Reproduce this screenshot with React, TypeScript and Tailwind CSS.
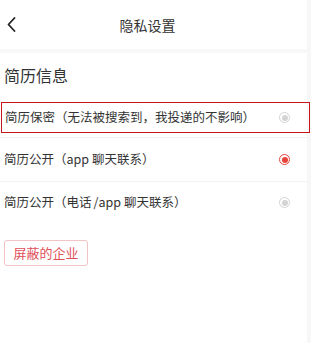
import React from "react";

const Radio = ({ checked }: { checked: boolean }) => (
  <span
    className={`flex h-[11px] w-[11px] items-center justify-center rounded-full border ${
      checked ? "border-[#e8433b]" : "border-[#d4d4d4]"
    }`}
  >
    <span
      className={`h-[6px] w-[6px] rounded-full ${checked ? "bg-[#e8433b]" : "bg-[#d4d4d4]"}`}
    />
  </span>
);

export default function App() {
  const font = { fontFamily: '"Noto Sans CJK SC", "Noto Sans", sans-serif' };
  return (
    <div className="flex h-[343px] w-[311px] bg-white text-[#333]" style={font}>
      <div className="relative z-10 flex w-[307px] flex-col">
        <div className="flex h-[49px] items-center">
          <div className="flex w-[40px] items-center pl-[7px]">
            <svg width="9" height="15" viewBox="0 0 9 15" fill="none">
              <polyline
                points="7.5,1 1.5,7.5 7.5,14"
                stroke="#222"
                strokeWidth="1.8"
                strokeLinecap="round"
                strokeLinejoin="round"
              />
            </svg>
          </div>
          <div className="flex-1 pr-[52px] text-center text-[14px] leading-none">隐私设置</div>
        </div>
        <div className="h-[4px] bg-[#f8f8f8]" />

        <div className="flex h-[43px] items-center pl-[4px] text-[16px] leading-none">简历信息</div>

        <div className="border-b border-[#f3f3f3] pt-[6px] pb-[4px]">
          <div className="ml-[1px] flex h-[31px] w-[309px] items-center justify-between border border-[#c8161d] pl-[3px] pr-[19px] text-[12.5px]">
            <span>简历保密（无法被搜索到，我投递的不影响）</span>
            <Radio checked={false} />
          </div>
        </div>

        <div className="flex h-[44px] items-center justify-between border-b border-[#f3f3f3] pl-[4px] pr-[17px] text-[12.5px]">
          <span>
            简历公开（<span className="mr-[3px]">app</span>聊天联系）
          </span>
          <Radio checked={true} />
        </div>

        <div className="flex h-[41px] items-center justify-between pl-[4px] pr-[17px] text-[12.5px]">
          <span>
            简历公开（电话<span className="ml-[2px] mr-[3px]">/app</span>聊天联系）
          </span>
          <Radio checked={false} />
        </div>

        <div className="pl-[4px] pt-[17px]">
          <button className="flex h-[26px] w-[84px] items-center justify-center rounded-[3px] border border-[#f2c4c6] text-[13px] text-[#e0505a]">
            屏蔽的企业
          </button>
        </div>
      </div>
      <div className="w-[4px] bg-[#f7f7f7]" />
    </div>
  );
}
